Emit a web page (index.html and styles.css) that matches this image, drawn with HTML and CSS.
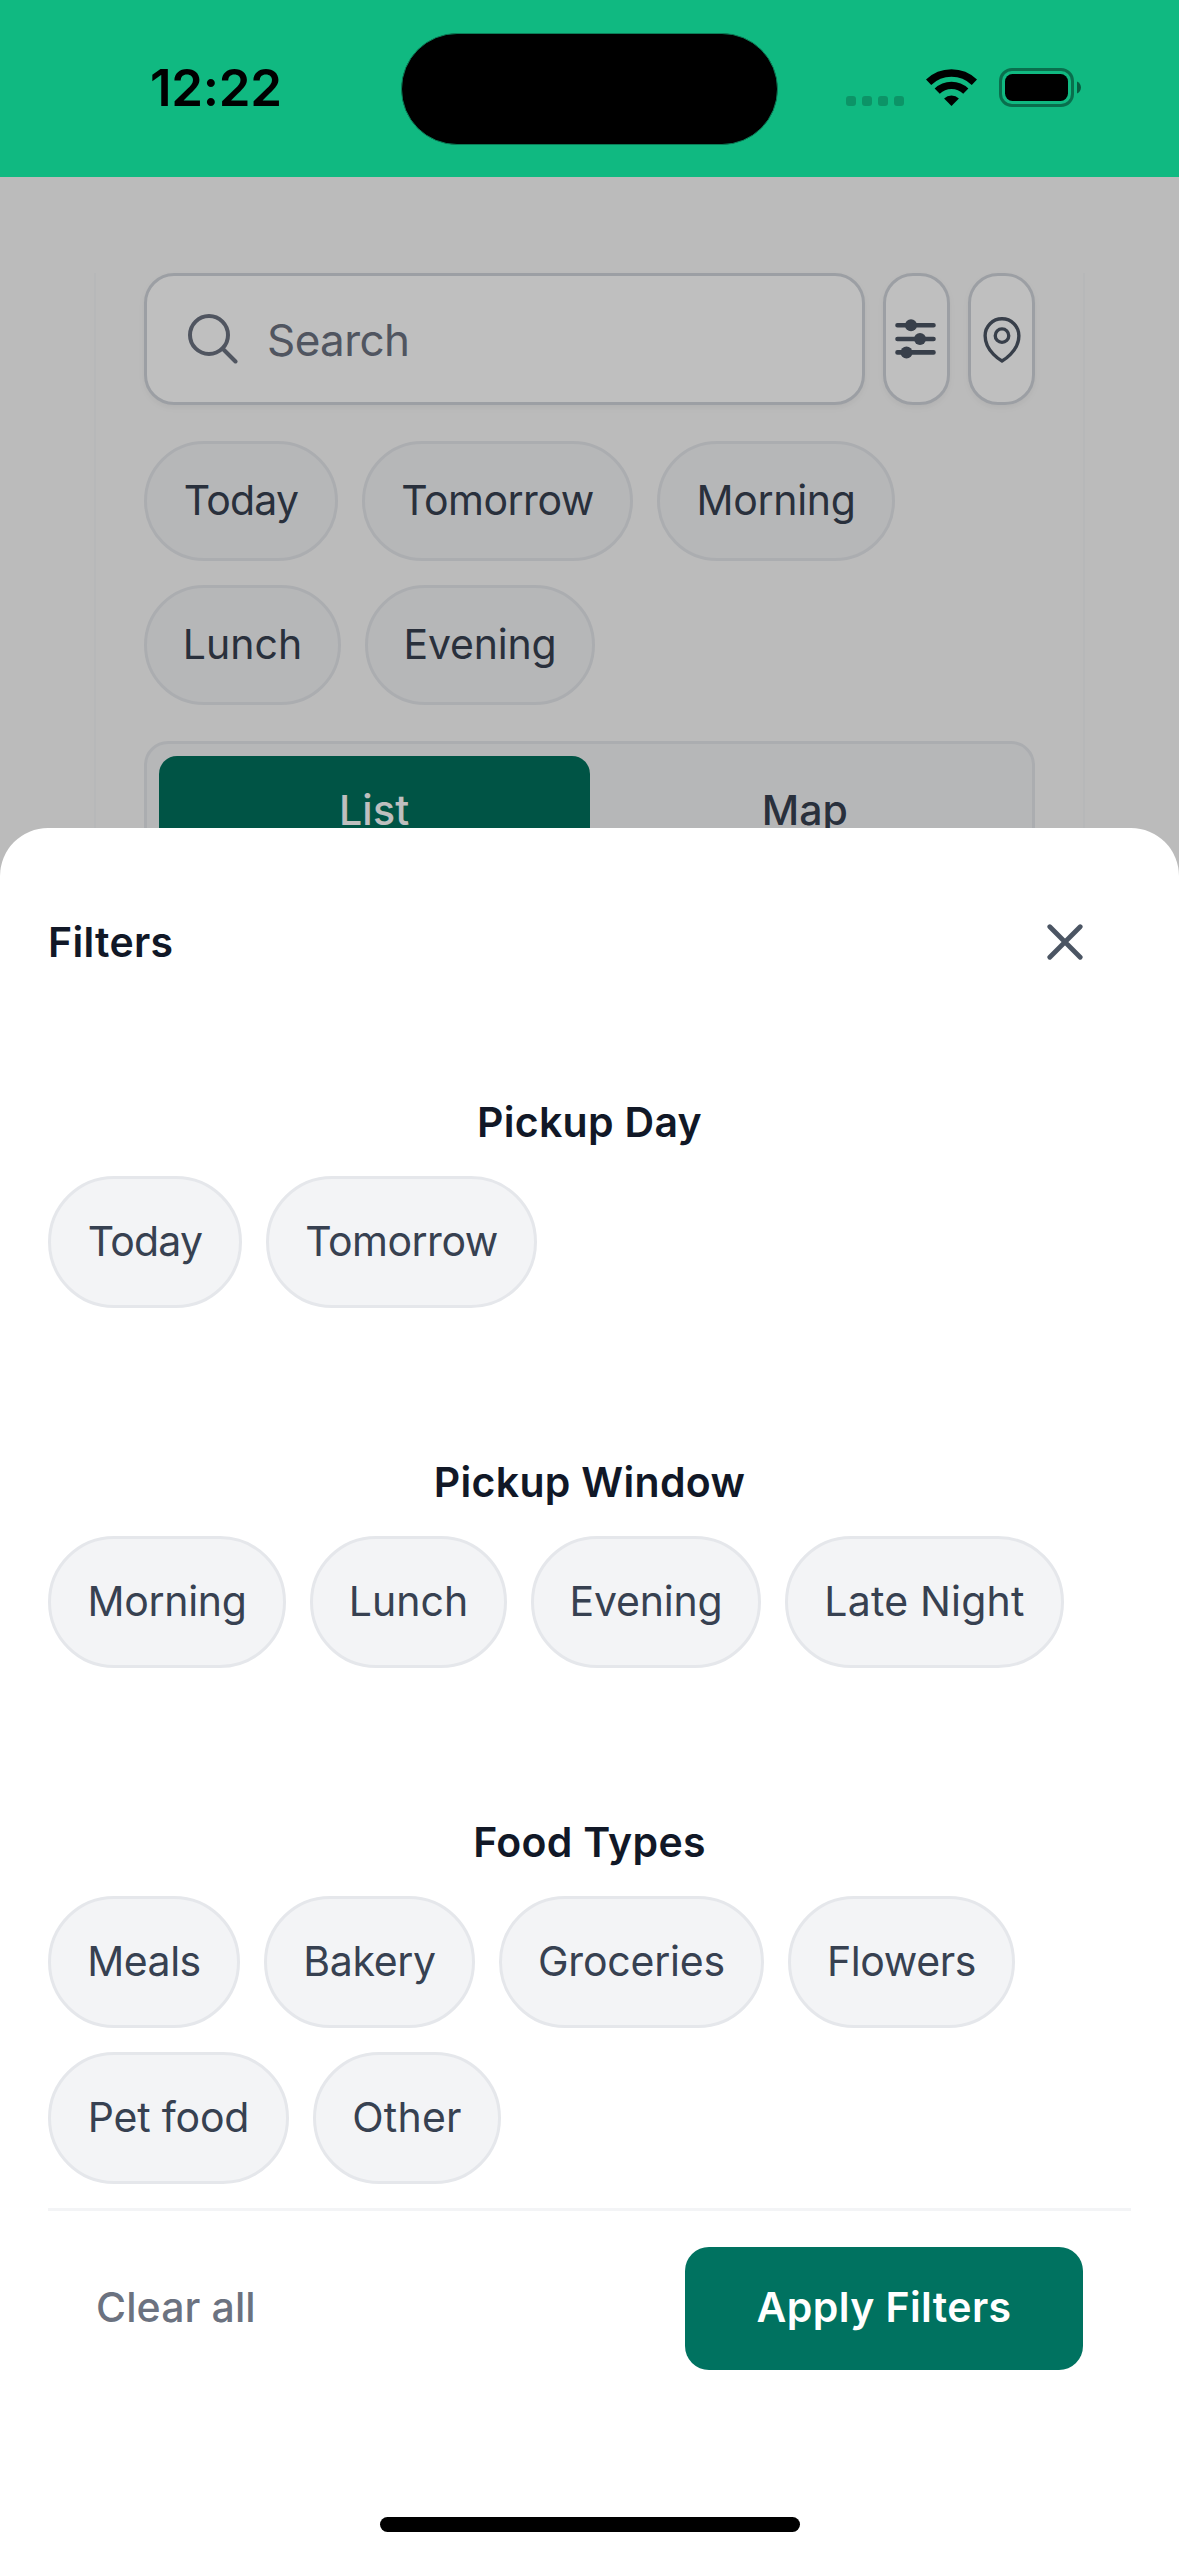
FILE: index.html
```html
<!DOCTYPE html>
<html lang="en">
<head>
<meta charset="utf-8">
<title>Filters</title>
<link rel="stylesheet" href="styles.css">
</head>
<body>
<div class="screen">
  <header class="status">
    <div class="clock">12:22</div>
    <div class="island"></div>
    <div class="indicators">
      <svg class="signal" width="58" height="10" viewBox="0 0 58 10"><rect width="10" height="10" rx="3"/><rect x="16" width="10" height="10" rx="3"/><rect x="32" width="10" height="10" rx="3"/><rect x="48" width="10" height="10" rx="3"/></svg>
      <svg class="wifi" width="51" height="37" viewBox="0 0 51 37"><g fill="none" stroke="#000"><path d="M2.6 13.2a33 33 0 0 1 45.8 0" stroke-width="7.6"/><path d="M11.2 22.1a20.6 20.6 0 0 1 28.6 0" stroke-width="7.4"/></g><path d="M25.5 37l-7.4-7.5a10.5 10.5 0 0 1 14.8 0z"/></svg>
      <svg class="battery" width="82" height="39" viewBox="0 0 82 39"><rect x="1.5" y="1.5" width="72" height="36" rx="11.5" fill="none" stroke="#000" stroke-opacity=".4" stroke-width="3"/><rect x="6" y="6" width="63" height="27" rx="7.5"/><path d="M78 13.5c5.3 2 5.3 10 0 12z" fill-opacity=".5"/></svg>
    </div>
  </header>

  <main class="page">
    <div class="card">
      <div class="search-row">
        <div class="search">
          <svg width="50" height="50" viewBox="0 0 50 50" fill="none" stroke="#6b7280" stroke-width="4" stroke-linecap="round"><circle cx="21" cy="21" r="19"/><path d="M34.5 34.5L47.5 47.5"/></svg>
          <span class="placeholder">Search</span>
        </div>
        <div class="tool">
          <svg class="sliders" width="41" height="42" viewBox="0 0 41 42" stroke="#4b5563" fill="#4b5563" stroke-width="4.6" stroke-linecap="round"><path d="M2.5 7.3H38.5M2.5 21H38.5M2.5 34.4H38.5"/><g stroke="none"><circle cx="16" cy="7.3" r="6"/><circle cx="25" cy="21" r="6"/><circle cx="11.5" cy="34.4" r="6"/></g></svg>
        </div>
        <div class="tool">
          <svg width="54" height="54" viewBox="0 0 24 24" fill="none" stroke="#4b5563" stroke-width="1.5" stroke-linejoin="round"><path d="M15 10.5a3 3 0 1 1-6 0 3 3 0 0 1 6 0z"/><path d="M19.5 10.5c0 7.142-7.5 11.25-7.5 11.25S4.5 17.642 4.5 10.5a7.5 7.5 0 1 1 15 0z"/></svg>
        </div>
      </div>
      <div class="chips quick">
        <span class="chip today">Today</span><span class="chip tomorrow">Tomorrow</span><span class="chip morning">Morning</span><span class="chip lunch">Lunch</span><span class="chip evening">Evening</span>
      </div>
      <div class="segmented">
        <span class="segment active">List</span>
        <span class="segment">Map</span>
      </div>
    </div>
    <div class="backdrop"></div>
  </main>

  <section class="sheet">
    <div class="sheet-head">
      <h2 class="title">Filters</h2>
      <svg width="36" height="36" viewBox="0 0 36 36" stroke="#4b5563" stroke-width="4.8" stroke-linecap="round"><path d="M2.8 2.8L33.2 33.2M33.2 2.8L2.8 33.2"/></svg>
    </div>
    <div class="group">
      <h3 class="title">Pickup Day</h3>
      <div class="chips"><span class="chip today">Today</span><span class="chip tomorrow">Tomorrow</span></div>
    </div>
    <div class="group">
      <h3 class="title">Pickup Window</h3>
      <div class="chips"><span class="chip morning">Morning</span><span class="chip lunch">Lunch</span><span class="chip evening">Evening</span><span class="chip late-night">Late Night</span></div>
    </div>
    <div class="group">
      <h3 class="title">Food Types</h3>
      <div class="chips"><span class="chip meals">Meals</span><span class="chip bakery">Bakery</span><span class="chip groceries">Groceries</span><span class="chip flowers">Flowers</span><span class="chip pet-food">Pet food</span><span class="chip other">Other</span></div>
    </div>
    <footer class="actions">
      <span class="clear">Clear all</span>
      <span class="apply">Apply Filters</span>
    </footer>
    <div class="home"></div>
  </section>
</div>
</body>
</html>
```
FILE: styles.css
```css
* { box-sizing: border-box; }
body { margin: 0; font-family: Inter, "Liberation Sans", sans-serif; font-size: 41px; line-height: 60px; color: #374151; }
svg { display: block; flex: none; }
h2, h3 { margin: 0; }

.screen { position: relative; width: 1179px; height: 2556px; overflow: hidden; background: #fafafa; }

.status { display: grid; grid-template-columns: 401px 377px 401px; height: 177px; padding-top: 33px; background: #10b981; color: #000; }
.clock { padding: 25px 0 0 150px; font-size: 51px; font-weight: 600; letter-spacing: -.3px; }
.island { height: 112px; border: 1px solid #0b7d57; border-radius: 56px; background: #000; }
.indicators { display: flex; align-items: flex-start; padding: 35px 0 0 68px; }
.signal { margin-top: 28px; fill-opacity: .2; }
.wifi { margin: 1px 22px 0; }

.page { position: relative; height: 2379px; padding: 96px 94px 0; }
.backdrop { position: absolute; inset: 0; background: rgba(0, 0, 0, .25); }
.card { height: 1800px; padding: 0 48px; border: 2px solid #f4f6f7; border-top-width: 0; background: #fafafa; }

.search-row { display: flex; gap: 18px; height: 132px; }
.search, .tool { display: flex; align-items: center; border: 3px solid #d1d5db; border-radius: 30px; background: #fff; box-shadow: 0 3px 6px rgba(0, 0, 0, .05); }
.search { flex: 1; gap: 29px; padding-left: 41px; }
.tool { width: 67px; justify-content: center; }
.sliders { margin-right: 3px; }
.placeholder { padding-top: 1px; font-size: 44px; letter-spacing: -.6px; color: #6b7280; }

.chips { display: flex; flex-wrap: wrap; gap: 24px; }
.chip { height: 132px; border: 3px solid #e5e7eb; border-radius: 66px; background: #f3f4f6; line-height: 124px; text-align: center; white-space: nowrap; }
.quick { margin-top: 36px; }
.quick .chip { height: 120px; line-height: 112px; }

.today { width: 194px; letter-spacing: -.8px; }
.tomorrow { width: 271px; letter-spacing: -.5px; }
.morning { width: 238px; letter-spacing: -.3px; }
.lunch { width: 197px; }
.evening { width: 230px; letter-spacing: -.2px; }
.late-night { width: 279px; letter-spacing: .2px; }
.meals { width: 192px; letter-spacing: -.5px; }
.bakery { width: 211px; letter-spacing: -.3px; }
.groceries { width: 265px; letter-spacing: -.2px; }
.flowers { width: 227px; letter-spacing: -.4px; }
.pet-food { width: 241px; letter-spacing: -.2px; }
.other { width: 188px; letter-spacing: .2px; }

.segmented { display: flex; height: 132px; margin-top: 36px; padding: 12px; border: 3px solid #e5e7eb; border-radius: 24px; background: #f3f4f6; font-weight: 500; }
.segment { flex: 1; text-align: center; line-height: 108px; }
.active { border-radius: 18px; background: #00715d; color: #fff; letter-spacing: .3px; }

.sheet { position: absolute; inset: 828px 0 0; padding: 0 48px; border-radius: 48px 48px 0 0; background: #fff; }
.title { font-size: 41px; font-weight: 600; line-height: 60px; letter-spacing: .3px; color: #111827; }
.sheet-head { display: flex; justify-content: space-between; align-items: center; height: 228px; padding-right: 48px; }
.group { height: 360px; padding-top: 36px; }
.group h3 { margin-bottom: 24px; text-align: center; }
.actions { display: flex; justify-content: space-between; align-items: center; height: 198px; margin-top: 72px; padding: 0 48px; border-top: 3px solid #f3f4f6; }
.clear { padding-bottom: 4px; font-weight: 500; letter-spacing: .1px; color: #6b7280; }
.apply { width: 398px; height: 123px; border-radius: 24px; background: #007260; color: #fff; font-weight: 600; line-height: 121px; letter-spacing: .4px; text-align: center; }
.home { width: 420px; height: 15px; margin: 111px auto 0; border-radius: 8px; background: #000; }
```
